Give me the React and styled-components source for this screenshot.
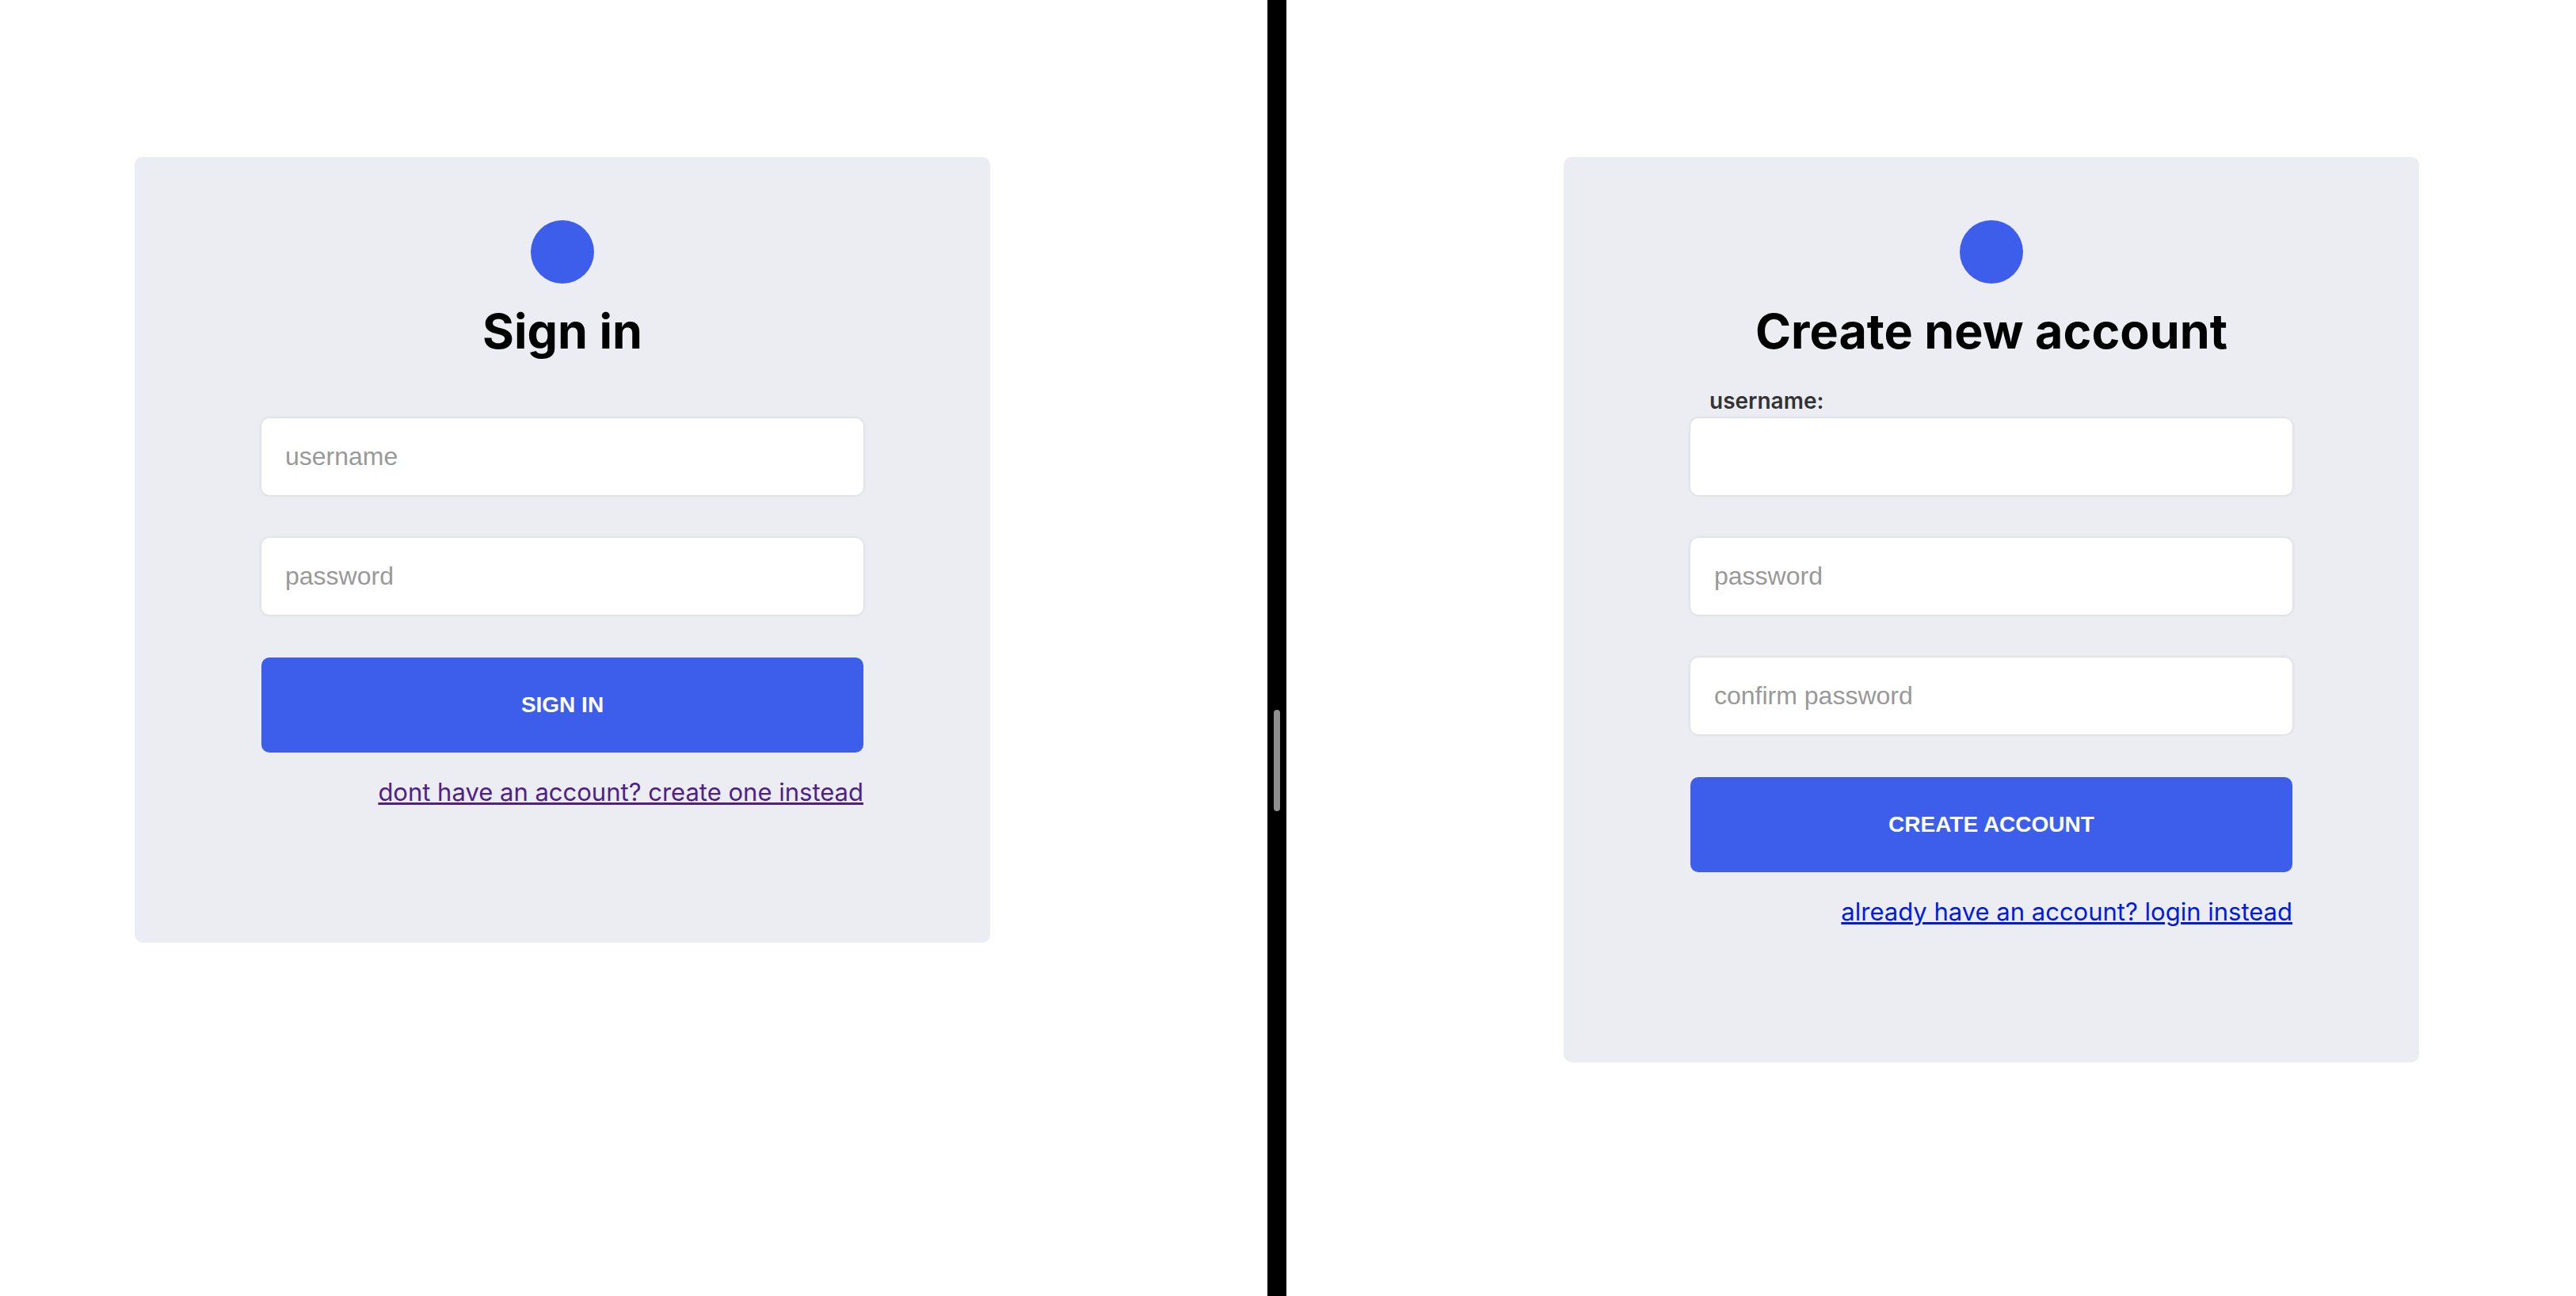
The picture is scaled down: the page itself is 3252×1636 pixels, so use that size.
import React, { useId, useState } from "react";
import styled, { createGlobalStyle } from "styled-components";

const GlobalStyle = createGlobalStyle`
  *, *::before, *::after { box-sizing: border-box; }
  body {
    margin: 0;
    background: #fff;
    color: #000;
    font-family: Inter, "Liberation Sans", sans-serif;
  }
`;

const SplitView = styled.div`
  display: grid;
  grid-template-columns: 1600fr 24px 1628fr;
  min-height: 100vh;
`;

const Pane = styled.main`
  display: flex;
  justify-content: center;
  align-items: flex-start;
  padding: 198px ${(p) => p.$right || 0}px 40px ${(p) => p.$left || 0}px;
`;

const Divider = styled.div`
  display: flex;
  justify-content: center;
  padding-top: 896px;
  background: #000;
`;

const Grip = styled.span`
  width: 8px;
  height: 128px;
  border-radius: 4px;
  background: #8e8e8e;
`;

const Card = styled.section`
  display: flex;
  flex-direction: column;
  align-items: center;
  width: 100%;
  max-width: 1080px;
  padding: 80px 160px 170px;
  border-radius: 10px;
  background: #ecedf3;
`;

const Logo = styled.div`
  width: 80px;
  height: 80px;
  border-radius: 50%;
  background: #3d5eeb;
`;

const Title = styled.h1`
  margin: 20px 0 0;
  font-size: 61px;
  line-height: 80px;
  font-weight: 700;
  text-align: center;
`;

const Form = styled.form`
  display: flex;
  flex-direction: column;
  width: 100%;
  margin-top: 16px;
`;

const FieldBox = styled.div`
  display: grid;
  grid-template-rows: 54px auto;
`;

const Label = styled.label`
  grid-row: 1;
  align-self: end;
  padding: 0 24px 4px;
  color: #333;
  font-size: 28px;
  line-height: 36px;
  font-weight: 600;
`;

const Input = styled.input`
  grid-row: 2;
  width: 100%;
  height: 97px;
  padding: 0 30px;
  border: 0;
  border-radius: 10px;
  outline: 0;
  background: #fff;
  box-shadow: 0 0 4px rgba(0, 0, 0, 0.12);
  font-family: "Liberation Sans", Arial, sans-serif;
  font-size: 32px;

  &::placeholder {
    color: #999;
    opacity: 1;
  }
`;

const SubmitButton = styled.button`
  width: 100%;
  height: 120px;
  margin-top: 54px;
  border: 0;
  border-radius: 10px;
  background: #3d5eeb;
  color: #fff;
  font-family: "Liberation Sans", Arial, sans-serif;
  font-size: 28px;
  font-weight: 700;
  text-transform: uppercase;
  cursor: pointer;
`;

const SwitchLink = styled.a`
  align-self: flex-end;
  margin-top: 30px;
  color: ${(p) => (p.$visited ? "#4f2188" : "#001ae6")};
  font-size: 31px;
  line-height: 40px;
  text-decoration-line: underline;
  text-decoration-thickness: 3px;
`;

function Field({ name, type = "text", active = false }) {
  const id = useId();
  const [floated, setFloated] = useState(active);
  return (
    <FieldBox>
      {floated && <Label htmlFor={id}>{name}:</Label>}
      <Input
        id={id}
        type={type}
        aria-label={name}
        placeholder={floated ? "" : name}
        onFocus={() => setFloated(true)}
        onBlur={(e) => setFloated(e.target.value !== "")}
      />
    </FieldBox>
  );
}

function AccountCard({ title, fields, action, link, visited }) {
  return (
    <Card>
      <Logo />
      <Title>{title}</Title>
      <Form onSubmit={(e) => e.preventDefault()}>
        {fields.map((field) => (
          <Field key={field.name} {...field} />
        ))}
        <SubmitButton type="submit">{action}</SubmitButton>
        <SwitchLink href="#" $visited={visited}>
          {link}
        </SwitchLink>
      </Form>
    </Card>
  );
}

export default function App() {
  return (
    <>
      <GlobalStyle />
      <SplitView>
        <Pane $right={180}>
          <AccountCard
            title="Sign in"
            fields={[{ name: "username" }, { name: "password", type: "password" }]}
            action="Sign in"
            link="dont have an account? create one instead"
            visited
          />
        </Pane>
        <Divider>
          <Grip />
        </Divider>
        <Pane as="div" $left={152}>
          <AccountCard
            title="Create new account"
            fields={[
              { name: "username", active: true },
              { name: "password", type: "password" },
              { name: "confirm password", type: "password" },
            ]}
            action="Create account"
            link="already have an account? login instead"
          />
        </Pane>
      </SplitView>
    </>
  );
}
